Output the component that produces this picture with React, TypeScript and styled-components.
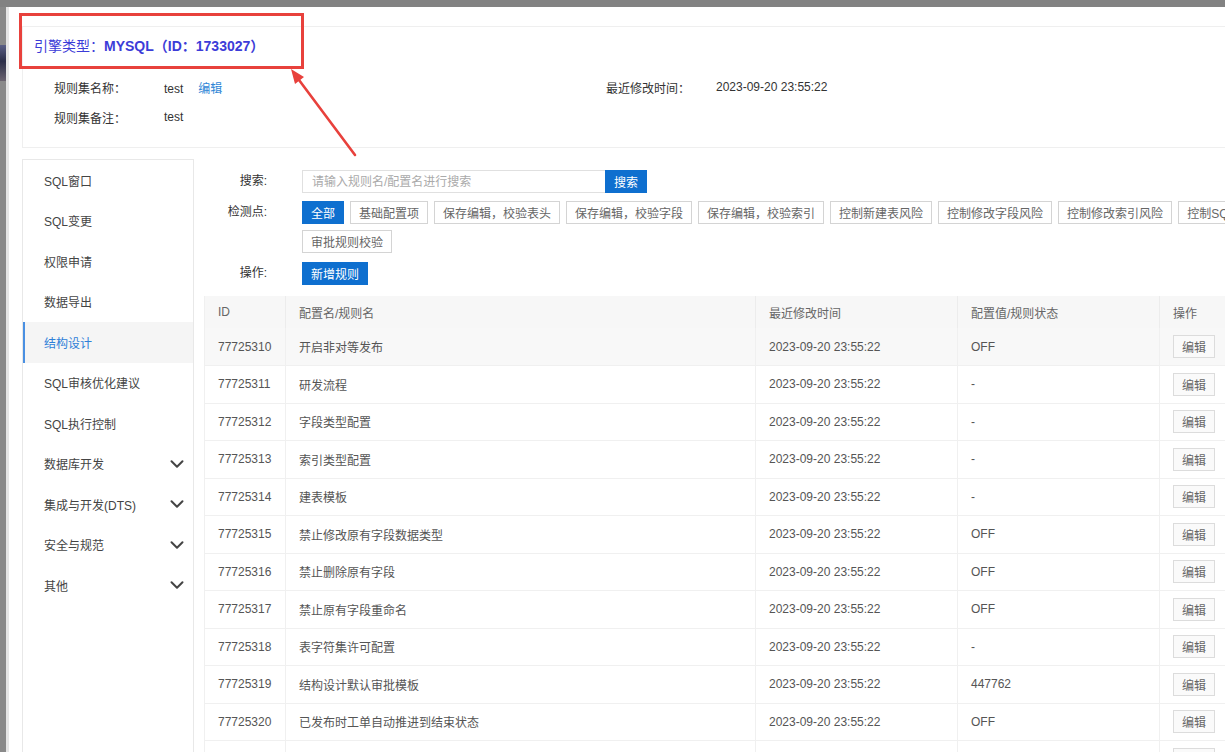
import React from 'react'
import styled, { createGlobalStyle } from 'styled-components'
import { ChevronDown } from 'lucide-react'

const GlobalStyle = createGlobalStyle`
  html, body {
    margin: 0;
    padding: 0;
    overflow: hidden;
    background: #828282;
  }
  body {
    font-family: "Liberation Sans", Arial, "Noto Sans CJK SC", sans-serif;
    font-size: 12px;
    color: #555;
  }
  * {
    box-sizing: border-box;
  }
`

interface RuleRow {
  id: string
  name: string
  time: string
  value: string
}

const TIME = '2023-09-20 23:55:22'

const rows: RuleRow[] = [
  { id: '77725310', name: '开启非对等发布', time: TIME, value: 'OFF' },
  { id: '77725311', name: '研发流程', time: TIME, value: '-' },
  { id: '77725312', name: '字段类型配置', time: TIME, value: '-' },
  { id: '77725313', name: '索引类型配置', time: TIME, value: '-' },
  { id: '77725314', name: '建表模板', time: TIME, value: '-' },
  { id: '77725315', name: '禁止修改原有字段数据类型', time: TIME, value: 'OFF' },
  { id: '77725316', name: '禁止删除原有字段', time: TIME, value: 'OFF' },
  { id: '77725317', name: '禁止原有字段重命名', time: TIME, value: 'OFF' },
  { id: '77725318', name: '表字符集许可配置', time: TIME, value: '-' },
  { id: '77725319', name: '结构设计默认审批模板', time: TIME, value: '447762' },
  { id: '77725320', name: '已发布时工单自动推进到结束状态', time: TIME, value: 'OFF' },
  { id: '77725321', name: '禁止删除原有索引', time: TIME, value: 'OFF' },
]

const menu: { label: string; active?: boolean; group?: boolean }[] = [
  { label: 'SQL窗口' },
  { label: 'SQL变更' },
  { label: '权限申请' },
  { label: '数据导出' },
  { label: '结构设计', active: true },
  { label: 'SQL审核优化建议' },
  { label: 'SQL执行控制' },
  { label: '数据库开发', group: true },
  { label: '集成与开发(DTS)', group: true },
  { label: '安全与规范', group: true },
  { label: '其他', group: true },
]

const checkpoints = [
  '全部',
  '基础配置项',
  '保存编辑，校验表头',
  '保存编辑，校验字段',
  '保存编辑，校验索引',
  '控制新建表风险',
  '控制修改字段风险',
  '控制修改索引风险',
  '控制SQL执行风险',
  '审批规则校验',
]

export default function App() {
  return (
    <>
      <GlobalStyle />
      <Frame>
        <LeftStrip>
          <Thumb />
        </LeftStrip>
        <Window>
          <Content>
            <HeaderCard>
              <Title>
                引擎类型：<strong>MYSQL（ID：1733027）</strong>
              </Title>
              <InfoGrid>
                <InfoLabel>规则集名称：</InfoLabel>
                <InfoValue>
                  test<LinkText>编辑</LinkText>
                </InfoValue>
                <InfoLabel>最近修改时间：</InfoLabel>
                <InfoValue>{TIME}</InfoValue>
                <InfoLabel>规则集备注：</InfoLabel>
                <InfoValue>test</InfoValue>
              </InfoGrid>
            </HeaderCard>

            <Body>
              <Sidebar>
                {menu.map((item) => (
                  <MenuItem key={item.label} $active={item.active}>
                    <span>{item.label}</span>
                    {item.group && <ChevronDown size={22} strokeWidth={2.2} color="#444" />}
                  </MenuItem>
                ))}
              </Sidebar>

              <Main>
                <FormRow>
                  <FormLabel>搜索:</FormLabel>
                  <SearchInput placeholder="请输入规则名/配置名进行搜索" />
                  <PrimaryButton>搜索</PrimaryButton>
                </FormRow>
                <FormRow $gap={8}>
                  <FormLabel>检测点:</FormLabel>
                  <TagList>
                    {checkpoints.map((c, i) => (
                      <Tag key={c} $active={i === 0}>
                        {c}
                      </Tag>
                    ))}
                  </TagList>
                </FormRow>
                <FormRow $gap={9}>
                  <FormLabel>操作:</FormLabel>
                  <PrimaryButton>新增规则</PrimaryButton>
                </FormRow>

                <Table>
                  <colgroup>
                    <col style={{ width: 81 }} />
                    <col style={{ width: 470 }} />
                    <col style={{ width: 202 }} />
                    <col style={{ width: 202 }} />
                    <col style={{ width: 80 }} />
                  </colgroup>
                  <thead>
                    <tr>
                      <Th>ID</Th>
                      <Th>配置名/规则名</Th>
                      <Th>最近修改时间</Th>
                      <Th>配置值/规则状态</Th>
                      <Th>操作</Th>
                    </tr>
                  </thead>
                  <tbody>
                    {rows.map((r, i) => (
                      <Tr key={r.id} $hover={i === 0}>
                        <Td>{r.id}</Td>
                        <Td>{r.name}</Td>
                        <Td>{r.time}</Td>
                        <Td>{r.value}</Td>
                        <Td>
                          <EditButton>编辑</EditButton>
                        </Td>
                      </Tr>
                    ))}
                  </tbody>
                </Table>
              </Main>
            </Body>
          </Content>
        </Window>

        <HighlightBox />
        <Arrow width="400" height="170" viewBox="0 0 400 170">
          <line x1="355" y1="155" x2="299" y2="80" stroke="#e8413c" strokeWidth="2.6" strokeLinecap="round" />
          <polygon points="291,69 304,77 295,84" fill="#e8413c" />
        </Arrow>
      </Frame>
    </>
  )
}

const Frame = styled.div`
  position: relative;
  display: flex;
  width: 1225px;
  height: 752px;
  padding-top: 7px;
  overflow: hidden;
  background: #828282;
`

const LeftStrip = styled.div`
  width: 6px;
  flex-shrink: 0;
  background: #8a8a8a;
`

const Thumb = styled.div`
  margin-top: 38px;
  height: 36px;
  background: linear-gradient(180deg, #5a5f86 0%, #2b2e48 45%, #6b6470 100%);
`

const Window = styled.div`
  flex: 1;
  min-width: 0;
  overflow: hidden;
  background: #fff;
  border-left: 3px solid #e6e6e6;
  padding: 19px 0 0 13px;
`

const Content = styled.div`
  width: 1240px;
`

const HeaderCard = styled.div`
  border: 1px solid #efefef;
  padding: 11px 0 15px 11px;
`

const Title = styled.div`
  font-size: 14px;
  line-height: 16px;
  color: #3c3cd8;

  strong {
    font-weight: 700;
  }
`

const InfoGrid = styled.div`
  display: grid;
  grid-template-columns: 110px 442px 110px auto;
  grid-auto-rows: 30px;
  align-items: center;
  margin: 18px 0 0 20px;
  color: #333;
`

const InfoLabel = styled.div`
  color: #333;
`

const InfoValue = styled.div`
  color: #333;
`

const LinkText = styled.span`
  margin-left: 15px;
  color: #2f86d6;
`

const Body = styled.div`
  display: flex;
  align-items: stretch;
  margin-top: 11px;
  height: 620px;
`

const Sidebar = styled.div`
  width: 172px;
  flex-shrink: 0;
  border: 1px solid #e8e8e8;
  border-bottom: 0;
`

const MenuItem = styled.div<{ $active?: boolean }>`
  display: flex;
  align-items: center;
  justify-content: space-between;
  height: 40.5px;
  padding: 0 5px 0 ${({ $active }) => ($active ? 19 : 21)}px;
  font-size: 12px;
  color: ${({ $active }) => ($active ? '#2e80d8' : '#444')};
  background: ${({ $active }) => ($active ? '#f5f5f5' : 'transparent')};
  border-left: ${({ $active }) => ($active ? '2px solid #4a90e2' : '0')};

  svg {
    flex-shrink: 0;
  }
`

const Main = styled.div`
  flex: 1;
  padding: 11px 0 0 10px;
`

const FormRow = styled.div<{ $gap?: number }>`
  display: flex;
  align-items: flex-start;
  margin-top: ${({ $gap }) => $gap ?? 0}px;
`

const FormLabel = styled.div`
  width: 63px;
  margin-right: 35px;
  flex-shrink: 0;
  text-align: right;
  line-height: 23px;
  font-size: 12px;
  color: #333;
`

const SearchInput = styled.input`
  width: 303px;
  height: 23px;
  padding: 0 9px;
  border: 1px solid #e0e0e0;
  border-right: 0;
  outline: none;
  font-family: inherit;
  font-size: 12px;
  color: #555;

  &::placeholder {
    color: #aaa;
  }
`

const PrimaryButton = styled.button`
  height: 23px;
  padding: 0 9px;
  border: 0;
  background: #0e6fcf;
  color: #fff;
  font-family: inherit;
  font-size: 12px;
  cursor: pointer;
`

const TagList = styled.div`
  display: flex;
  flex-wrap: wrap;
  gap: 6px;
  width: 1000px;
`

const Tag = styled.button<{ $active?: boolean }>`
  height: 23px;
  padding: 0 8px;
  border: 1px solid ${({ $active }) => ($active ? '#0e6fcf' : '#d4d4d4')};
  background: ${({ $active }) => ($active ? '#0e6fcf' : '#fff')};
  color: ${({ $active }) => ($active ? '#fff' : '#666')};
  font-family: inherit;
  font-size: 12px;
  white-space: nowrap;
  cursor: pointer;
`

const Table = styled.table`
  margin-top: 11px;
  width: 1035px;
  table-layout: fixed;
  border-collapse: collapse;
  border-left: 1px solid #f0f0f0;
`

const Th = styled.th`
  height: 32px;
  padding: 0 0 0 13px;
  background: #f7f7f7;
  border-right: 1px solid #ececec;
  text-align: left;
  font-weight: 400;
  font-size: 12px;
  color: #666;
`

const Tr = styled.tr<{ $hover?: boolean }>`
  background: ${({ $hover }) => ($hover ? '#f8f8f8' : '#fff')};
`

const Td = styled.td`
  height: 37.5px;
  padding: 0 0 0 13px;
  border-right: 1px solid #f0f0f0;
  border-bottom: 1px solid #f0f0f0;
  font-size: 12px;
  color: #555;
  white-space: nowrap;
`

const EditButton = styled.button`
  height: 23px;
  padding: 0 8px;
  border: 1px solid #dcdcdc;
  background: #fafafa;
  color: #666;
  font-family: inherit;
  font-size: 12px;
  cursor: pointer;
`

const HighlightBox = styled.div`
  position: absolute;
  left: 19px;
  top: 13px;
  width: 285px;
  height: 56px;
  border: 3px solid #e8413c;
  pointer-events: none;
`

const Arrow = styled.svg`
  position: absolute;
  left: 0;
  top: 0;
  pointer-events: none;
`
